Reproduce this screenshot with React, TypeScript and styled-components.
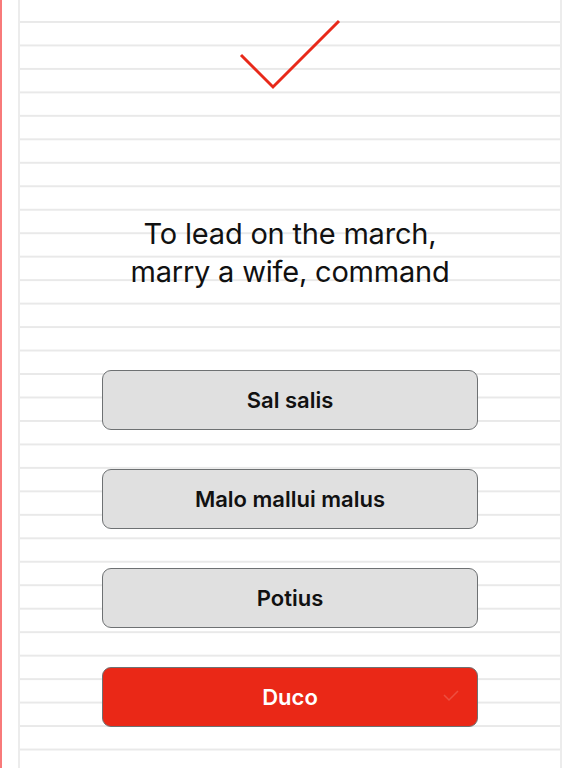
import React from "react";
import styled, { createGlobalStyle } from "styled-components";

const Global = createGlobalStyle`
  html, body { margin: 0; padding: 0; background: #ffffff; }
  body { font-family: Inter, "Liberation Sans", sans-serif; }
`;

const Page = styled.div`
  width: 576px;
  height: 768px;
  display: flex;
  background: #ffffff;
  overflow: hidden;
`;

const MarginRule = styled.div`
  width: 2px;
  flex: none;
  background: #f87a7a;
`;

const Gutter = styled.div`
  width: 16px;
  flex: none;
`;

const Sheet = styled.div`
  width: 544px;
  flex: none;
  box-sizing: border-box;
  border-left: 2px solid #ececec;
  border-right: 2px solid #ececec;
  background-image: linear-gradient(
    to bottom,
    #e9e9e9 0px,
    #e9e9e9 2px,
    transparent 2px,
    transparent 100%
  );
  background-size: 100% 23.47px;
  background-repeat: repeat-y;
  background-position: 0 21px;
  display: flex;
  flex-direction: column;
  align-items: center;
`;

const CheckMark = styled.svg`
  display: block;
  margin-top: 16px;
  width: 108px;
  height: 76px;
`;

const Question = styled.h1`
  margin: 123px 0 0;
  font-family: Inter, "Liberation Sans", sans-serif;
  font-weight: 400;
  font-size: 29px;
  line-height: 38px;
  color: #111111;
  text-align: center;
  letter-spacing: -0.2px;
`;

const Answers = styled.div`
  margin-top: 79px;
  display: flex;
  flex-direction: column;
  gap: 39px;
`;

const Answer = styled.button<{ $correct?: boolean }>`
  position: relative;
  width: 376px;
  height: 60px;
  box-sizing: border-box;
  border: 1.5px solid #6e7173;
  border-radius: 9px;
  background: ${(p) => (p.$correct ? "#ea2817" : "#e0e0e0")};
  color: ${(p) => (p.$correct ? "#ffffff" : "#111111")};
  font-family: Inter, "Liberation Sans", sans-serif;
  font-weight: 600;
  font-size: 22px;
  display: flex;
  align-items: center;
  justify-content: center;
  padding: 0;
  cursor: pointer;
`;

const FaintCheck = styled.svg`
  position: absolute;
  right: 18px;
  top: 22px;
  width: 16px;
  height: 12px;
`;

const answers = [
  { label: "Sal salis" },
  { label: "Malo mallui malus" },
  { label: "Potius" },
  { label: "Duco", correct: true },
];

export default function App() {
  return (
    <>
      <Global />
      <Page>
        <MarginRule />
        <Gutter />
        <Sheet>
          <CheckMark viewBox="0 0 108 76">
            <polyline
              points="5,39 37,71 103,5"
              fill="none"
              stroke="#e8291a"
              strokeWidth="3"
            />
          </CheckMark>
          <Question>
            To lead on the march,
            <br />
            marry a wife, command
          </Question>
          <Answers>
            {answers.map((a) => (
              <Answer key={a.label} $correct={a.correct}>
                {a.label}
                {a.correct && (
                  <FaintCheck viewBox="0 0 16 12">
                    <polyline
                      points="1,5 6,10 15,1"
                      fill="none"
                      stroke="rgba(255,255,255,0.18)"
                      strokeWidth="1.5"
                    />
                  </FaintCheck>
                )}
              </Answer>
            ))}
          </Answers>
        </Sheet>
      </Page>
    </>
  );
}
